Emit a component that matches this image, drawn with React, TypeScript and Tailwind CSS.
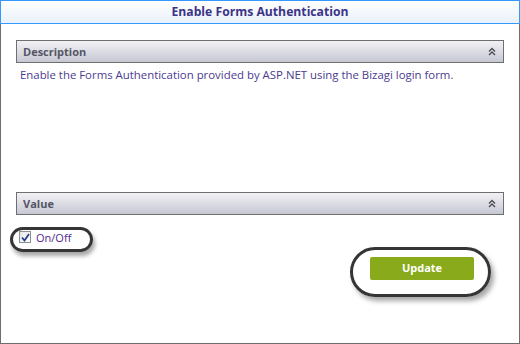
import { useState } from 'react';

function CollapseIcon() {
  return (
    <svg width="8" height="9" viewBox="0 0 8 9" className="text-[#4a4a56]">
      <path d="M1 4.5 L4 1.5 L7 4.5" fill="none" stroke="currentColor" strokeWidth="1.4" />
      <path d="M1 8 L4 5 L7 8" fill="none" stroke="currentColor" strokeWidth="1.4" />
    </svg>
  );
}

function SectionHeader({ title }: { title: string }) {
  return (
    <div className="h-[23px] border border-[#6f6f6f] bg-gradient-to-b from-[#f2f2f5] via-[#dcdde4] to-[#c5c7d3] flex items-center justify-between pl-[6px] pr-[7px]">
      <span className="text-[11px] font-bold text-[#555566] leading-none">{title}</span>
      <CollapseIcon />
    </div>
  );
}

export default function App() {
  const [on, setOn] = useState(true);

  return (
    <div className="w-[520px] h-[344px] flex flex-col bg-white font-['Open_Sans','Noto_Sans',sans-serif]">
      <div className="h-[24px] border border-[#3399ff] bg-gradient-to-b from-white to-[#eaf1fa] flex items-center justify-center">
        <span className="text-[12.2px] font-bold text-[#3b3488] leading-none">Enable Forms Authentication</span>
      </div>

      <div className="relative flex-1 border-x border-b border-[#6e6e6e] px-[15px] pt-[16px]">
        <SectionHeader title="Description" />
        <p className="mt-[5px] pl-[4px] text-[11.4px] text-[#4b3b8f] leading-[14px]">
          Enable the Forms Authentication provided by ASP.NET using the Bizagi login form.
        </p>

        <div className="mt-[110px]">
          <SectionHeader title="Value" />
        </div>

        <label className="mt-[16px] ml-[3px] flex items-center gap-[5px] cursor-pointer w-fit">
          <span
            onClick={() => setOn(!on)}
            className="w-[12px] h-[12px] border border-[#8e8f8f] bg-gradient-to-br from-[#e6e6e6] to-white flex items-center justify-center"
          >
            {on && (
              <svg width="9" height="9" viewBox="0 0 9 9">
                <path d="M1 4.5 L3.5 7.5 L8 1" fill="none" stroke="#263f8c" strokeWidth="1.8" />
              </svg>
            )}
          </span>
          <span className="text-[11px] text-[#4f2b8f] leading-none">On/Off</span>
        </label>

        <div className="flex justify-end pr-[30px] mt-[14px]">
          <button
            type="button"
            className="w-[104px] h-[23px] rounded-[2px] bg-[#89aa1a] text-white text-[11px] font-bold"
          >
            Update
          </button>
        </div>

        <div className="absolute left-[9px] top-[203px] w-[83px] h-[25px] rounded-full border-[3px] border-[#353535] shadow-[2px_4px_4px_rgba(0,0,0,0.35)]" />
        <div className="absolute left-[349px] top-[223px] w-[141px] h-[50px] rounded-full border-[3px] border-[#353535] shadow-[3px_4px_5px_rgba(0,0,0,0.35)]" />
      </div>
    </div>
  );
}
